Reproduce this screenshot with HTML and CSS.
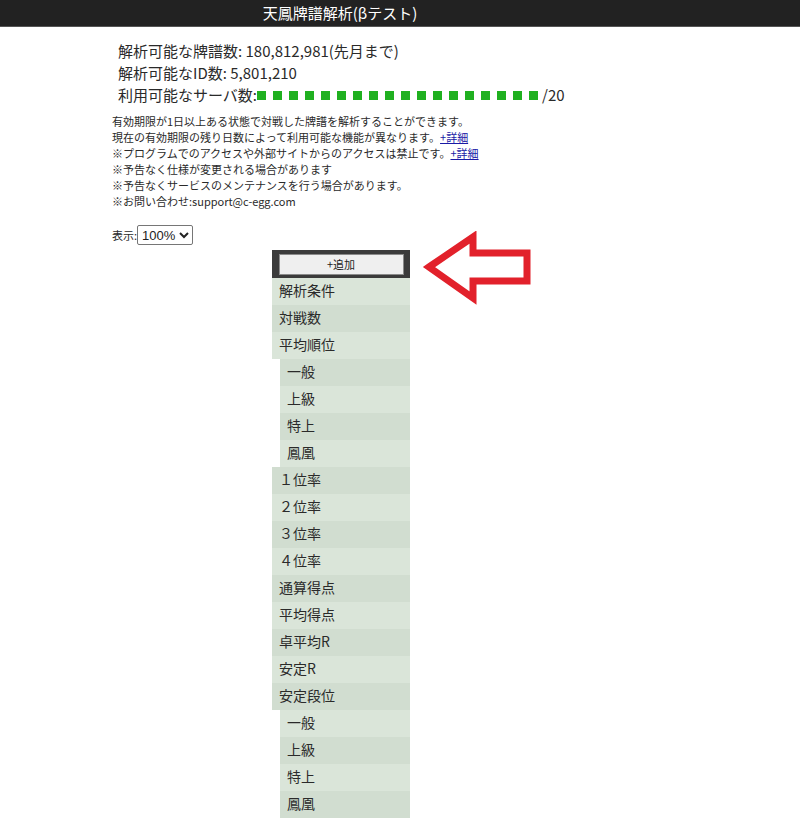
FILE: index.html
```html
<!DOCTYPE html>
<html lang="ja">
<head>
    <meta charset="UTF-8">
    <meta name="viewport" content="width=device-width, initial-scale=1.0">
    <title>天鳳牌譜解析(βテスト)</title>
    <link rel="stylesheet" href="styles.css">
</head>
<body>
    <!-- Header -->
    <div class="header">
        <div class="title">天鳳牌譜解析(βテスト)</div>
    </div>

    <!-- Stats -->
    <div class="stats">
        <div>解析可能な牌譜数: 180,812,981(先月まで)</div>
        <div>解析可能なID数: 5,801,210</div>
        <div class="servers">利用可能なサーバ数:
            <span class="dots">
                <i></i><i></i><i></i><i></i><i></i><i></i><i></i><i></i><i></i>
                <i></i><i></i><i></i><i></i><i></i><i></i><i></i><i></i><i></i>
            </span>/20
        </div>
    </div>

    <!-- Notices -->
    <div class="notice">
        <div>有効期限が1日以上ある状態で対戦した牌譜を解析することができます。</div>
        <div>現在の有効期限の残り日数によって利用可能な機能が異なります。<a href="#">+詳細</a></div>
        <div>※プログラムでのアクセスや外部サイトからのアクセスは禁止です。<a href="#">+詳細</a></div>
        <div>※予告なく仕様が変更される場合があります</div>
        <div>※予告なくサービスのメンテナンスを行う場合があります。</div>
        <div>※お問い合わせ:support@c-egg.com</div>
    </div>

    <div class="zoom">表示:<select>
            <option>100%</option>
            <option>75%</option>
            <option>50%</option>
        </select>
    </div>

    <!-- Column list -->
    <div class="board">
        <div class="panel">
            <div class="panel-head"><button type="button">+追加</button></div>
            <div class="row">解析条件</div>
            <div class="row">対戦数</div>
            <div class="row">平均順位</div>
            <div class="row sub">一般</div>
            <div class="row sub">上級</div>
            <div class="row sub">特上</div>
            <div class="row sub">鳳凰</div>
            <div class="row">１位率</div>
            <div class="row">２位率</div>
            <div class="row">３位率</div>
            <div class="row">４位率</div>
            <div class="row">通算得点</div>
            <div class="row">平均得点</div>
            <div class="row">卓平均R</div>
            <div class="row">安定R</div>
            <div class="row">安定段位</div>
            <div class="row sub">一般</div>
            <div class="row sub">上級</div>
            <div class="row sub">特上</div>
            <div class="row sub">鳳凰</div>
        </div>

        <svg class="arrow" width="120" height="80" viewBox="0 0 120 80">
            <polygon points="8,36 52,6 52,22 106,22 106,50 52,50 52,67"
                     fill="none" stroke="#e2212b" stroke-width="7" stroke-linejoin="miter"/>
        </svg>
    </div>
</body>
</html>
```

FILE: styles.css
```css
/* General Styles */
body {
    margin: 0;
    font-family: "Noto Sans CJK JP", "Noto Sans", sans-serif;
    color: #2a2a2a;
    background: #fff;
}

.header {
    background-color: #222;
    border-bottom: 1px solid #555;
    height: 26px;
}

.title {
    width: 680px;
    text-align: center;
    color: #fff;
    font-size: 15px;
    line-height: 26px;
}

.stats {
    margin: 13px 0 0 118px;
    font-size: 15px;
    line-height: 22px;
}

.servers {
    display: flex;
    align-items: center;
}

.dots {
    display: flex;
    gap: 7px;
    margin: 0 4px 0 0;
}

.dots i {
    display: block;
    width: 9px;
    height: 9px;
    background-color: #20b020;
}

.notice {
    margin: 7px 0 0 112px;
    font-size: 11px;
    line-height: 16px;
}

.notice a {
    color: #1a1aa6;
}

.zoom {
    margin: 16px 0 0 112px;
    font-size: 11px;
    display: flex;
    align-items: center;
    height: 20px;
}

.zoom select {
    font-family: "Liberation Sans", Arial, sans-serif;
    font-size: 13px;
    height: 20px;
    padding: 0;
    border: 1px solid #767676;
    border-radius: 2px;
    background: #fff;
    color: #222;
}

/* Panel */
.board {
    display: flex;
    align-items: flex-start;
    margin: 5px 0 0 272px;
}

.panel {
    width: 138px;
}

.panel-head {
    background-color: #3b3b3b;
    height: 28px;
    display: flex;
    align-items: center;
    justify-content: center;
}

.panel-head button {
    width: 125px;
    height: 21px;
    padding: 0;
    font-family: "Noto Sans CJK JP", sans-serif;
    font-size: 11px;
    color: #222;
    background-color: #efefef;
    border: 1px solid #8a8a8a;
    border-radius: 0;
}

.row {
    height: 27px;
    line-height: 25px;
    font-size: 14px;
    padding-left: 7px;
    background-color: #dae5d9;
}

.row:nth-child(odd) {
    background-color: #d1ddd0;
}

.row.sub {
    margin-left: 8px;
}

.arrow {
    margin: -19px 0 0 11px;
}
```
